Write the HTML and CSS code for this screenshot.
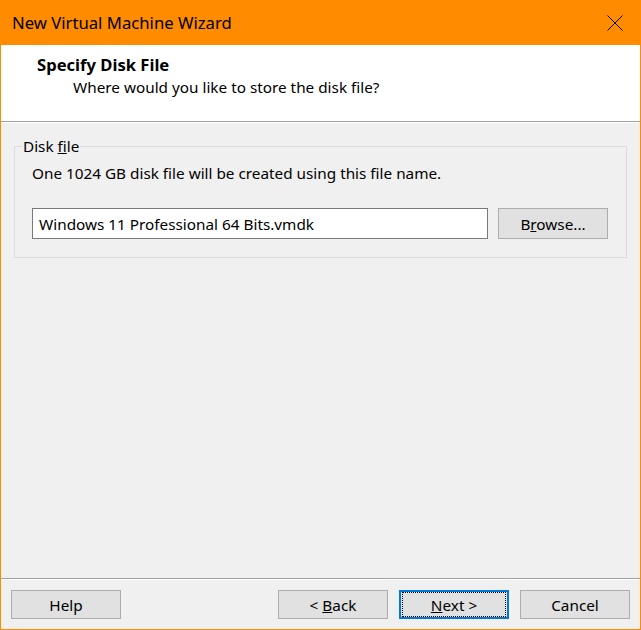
FILE: index.html
```html
<!DOCTYPE html>
<html>
<head>
<meta charset="utf-8">
<link rel="stylesheet" href="styles.css">
</head>
<body>
<div class="window">
  <div class="titlebar">
    <span class="title">New Virtual Machine Wizard</span>
    <svg class="close" width="16" height="16" viewBox="0 0 16 16"><path d="M0.5 0.5 L15.5 15.5 M15.5 0.5 L0.5 15.5" stroke="#000" stroke-width="1" fill="none"/></svg>
  </div>
  <div class="client">
    <div class="header">
      <div class="h-title">Specify Disk File</div>
      <div class="h-sub">Where would you like to store the disk file?</div>
    </div>
    <div class="body">
      <fieldset class="group">
        <legend>Disk <u>f</u>ile</legend>
        <div class="desc">One 1024 GB disk file will be created using this file name.</div>
        <div class="row">
          <div class="input">Windows 11 Professional 64 Bits.vmdk</div>
          <div class="btn"><span>B<u>r</u>owse...</span></div>
        </div>
      </fieldset>
    </div>
    <div class="footer">
      <div class="btn"><span>Help</span></div>
      <div class="spacer"></div>
      <div class="btn"><span>&lt; <u>B</u>ack</span></div>
      <div class="btn default"><span class="focus"><span><u>N</u>ext &gt;</span></span></div>
      <div class="btn"><span>Cancel</span></div>
    </div>
  </div>
</div>
</body>
</html>
```

FILE: styles.css
```css
html, body {
  margin: 0;
  padding: 0;
}
body {
  width: 641px;
  height: 630px;
  overflow: hidden;
  font-family: "Noto Sans", "Open Sans", sans-serif;
  font-size: 15.3px;
  color: #000;
}
.window {
  width: 641px;
  height: 630px;
  box-sizing: border-box;
  background: #ff8c00;
  display: flex;
  flex-direction: column;
  padding: 0 1px 1px 1px;
}
.titlebar {
  height: 45px;
  display: flex;
  align-items: center;
  justify-content: space-between;
  padding: 0 17px 0 11px;
  flex: none;
}
.title {
  font-size: 16.7px;
  line-height: 20px;
  margin-top: 1px;
}
.close {
  display: block;
  margin-top: 1px;
}
.client {
  flex: 1;
  background: #f0f0f0;
  display: flex;
  flex-direction: column;
}
.header {
  background: #fff;
  height: 77px;
  border-bottom: 1px solid #a0a0a0;
  box-shadow: 0 1px 0 #fff;
  padding: 10px 0 0 36px;
  box-sizing: border-box;
  flex: none;
}
.h-title {
  font-weight: bold;
  font-size: 16.6px;
  line-height: 20px;
}
.h-sub {
  margin-left: 36px;
  line-height: 20px;
  margin-top: 2px;
}
.body {
  flex: 1;
  padding: 15px 13px 0 13px;
}
.group {
  margin: 0;
  border: 1px solid #dcdcdc;
  padding: 0 18px 18px 17px;
  box-sizing: border-box;
}
.group legend {
  padding: 0 1px;
  margin-left: -10px;
  line-height: 18px;
}
.desc {
  margin-top: 8px;
  line-height: 20px;
}
.row {
  display: flex;
  margin-top: 25px;
  gap: 10px;
}
.input {
  flex: 1;
  height: 31px;
  box-sizing: border-box;
  background: #fff;
  border: 1px solid #7a7a7a;
  padding: 0 0 0 6px;
  display: flex;
  align-items: center;
  line-height: 20px;
}
.btn {
  width: 110px;
  height: 31px;
  box-sizing: border-box;
  background: #e1e1e1;
  border: 1px solid #adadad;
  display: flex;
  align-items: center;
  justify-content: center;
  line-height: 20px;
  white-space: pre;
}
.footer {
  flex: none;
  height: 51px;
  border-top: 1px solid #a0a0a0;
  box-shadow: inset 0 1px 0 #fff;
  display: flex;
  align-items: flex-start;
  padding: 11px 10px 0 10px;
  box-sizing: border-box;
  gap: 11px;
}
.footer .btn {
  height: 29px;
}
.spacer {
  flex: 1;
}
.btn.default {
  border: 2px solid #0078d7;
}
.focus {
  display: flex;
  align-items: center;
  justify-content: center;
  width: 100%;
  height: 100%;
  margin: 1px;
  border: 1px dotted #000;
  box-sizing: border-box;
}
```
